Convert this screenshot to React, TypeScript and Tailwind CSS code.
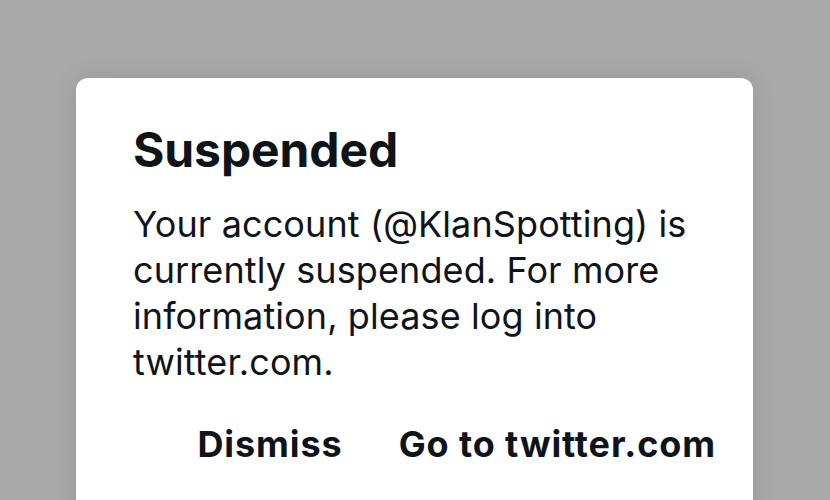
export default function App() {
  return (
    <div className="w-[830px] h-[500px] overflow-hidden bg-[#a9a9a9] font-['Inter',sans-serif] text-[#0f1419]">
      <div className="pt-[78px] pl-[76px]">
        <div className="w-[677px] h-[480px] bg-white rounded-[12px] shadow-[0_0_24px_rgba(0,0,0,0.12)] pl-[57px] pr-[37px] pt-[44px]">
          <h1 className="text-[48px] font-bold leading-[56px] tracking-[-0.1px]">Suspended</h1>
          <p className="mt-[23px] text-[36px] leading-[46px] tracking-[0.1px]">
            Your account (@KlanSpotting) is currently suspended. For more information, please log into twitter.com.
          </p>
          <div className="mt-[37px] flex justify-end gap-[56px] text-[36px] font-bold leading-[44px] tracking-[0.9px]">
            <button className="font-bold">Dismiss</button>
            <button className="font-bold">Go to twitter.com</button>
          </div>
        </div>
      </div>
    </div>
  )
}
